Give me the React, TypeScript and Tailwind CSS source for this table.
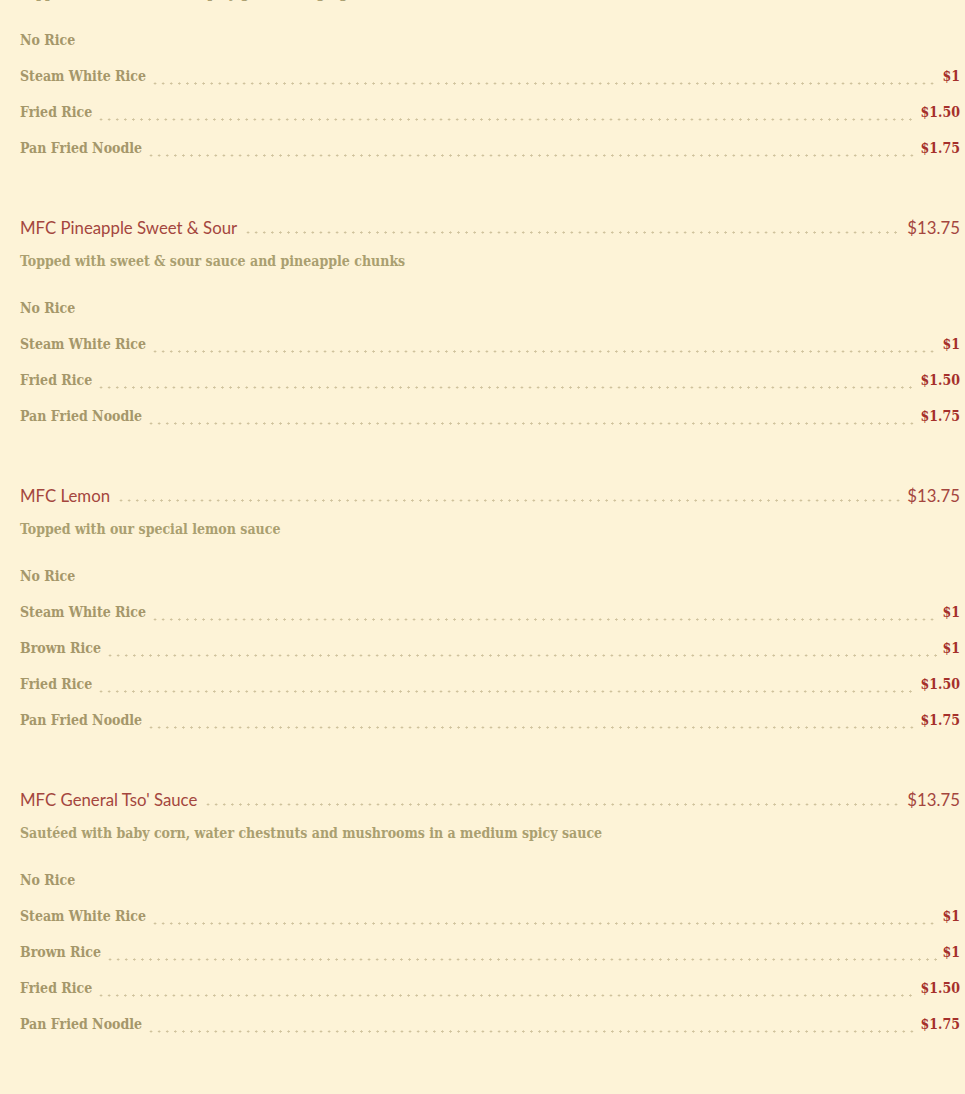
type Option = { name: string; price?: string };

type Dish = {
  title: string;
  price: string;
  description: string;
  options: Option[];
};

const base: Option[] = [
  { name: "No Rice" },
  { name: "Steam White Rice", price: "$1" },
  { name: "Fried Rice", price: "$1.50" },
  { name: "Pan Fried Noodle", price: "$1.75" },
];

const withBrown: Option[] = [
  { name: "No Rice" },
  { name: "Steam White Rice", price: "$1" },
  { name: "Brown Rice", price: "$1" },
  { name: "Fried Rice", price: "$1.50" },
  { name: "Pan Fried Noodle", price: "$1.75" },
];

const dishes: Dish[] = [
  {
    title: "MFC Spicy Garlic",
    price: "$13.75",
    description: "Topped with our medium spicy garlic and ginger sauce",
    options: base,
  },
  {
    title: "MFC Pineapple Sweet & Sour",
    price: "$13.75",
    description: "Topped with sweet & sour sauce and pineapple chunks",
    options: base,
  },
  {
    title: "MFC Lemon",
    price: "$13.75",
    description: "Topped with our special lemon sauce",
    options: withBrown,
  },
  {
    title: "MFC General Tso' Sauce",
    price: "$13.75",
    description:
      "Sautéed with baby corn, water chestnuts and mushrooms in a medium spicy sauce",
    options: withBrown,
  },
];

const slab = "font-['DejaVu_Serif_Condensed','DejaVu_Serif',serif]";

function Leader({ className = "" }: { className?: string }) {
  return (
    <span
      className={`flex-1 self-stretch bg-[radial-gradient(circle,#cfc29c_0.9px,transparent_1.3px)] bg-[length:8.1px_3px] bg-repeat-x ${className}`}
    />
  );
}

function DishBlock({ dish }: { dish: Dish }) {
  return (
    <section className="pb-[50px]">
      <div className="flex h-6 items-center gap-[7px] font-['Lato',sans-serif] text-[16.8px] font-normal leading-6 text-[#a4463e]">
        <span>{dish.title}</span>
        <Leader className="bg-[position:0_15px]" />
        <span>{dish.price}</span>
      </div>
      <p
        className={`mt-[9px] h-6 text-[14px] font-bold leading-6 text-[#aa9f70] ${slab}`}
      >
        {dish.description}
      </p>
      <ul className="mt-[17px]">
        {dish.options.map((o) => (
          <li
            key={o.name}
            className={`flex h-9 items-center gap-[5px] text-[14px] font-bold leading-9 ${slab}`}
          >
            <span className="text-[#a5976a]">{o.name}</span>
            {o.price && (
              <>
                <Leader className="bg-[position:0_24px]" />
                <span className="text-[#a5302b]">{o.price}</span>
              </>
            )}
          </li>
        ))}
      </ul>
    </section>
  );
}

export default function App() {
  return (
    <div className="min-h-screen overflow-hidden bg-[#fdf3d7]">
      <div className="-mt-[52px] pl-5 pr-[5px]">
        {dishes.map((d) => (
          <DishBlock key={d.title} dish={d} />
        ))}
      </div>
    </div>
  );
}
